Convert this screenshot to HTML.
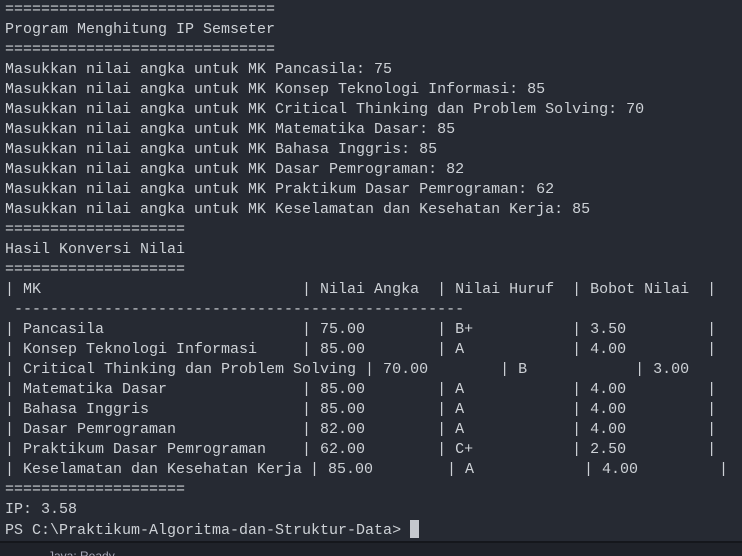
<!DOCTYPE html>
<html><head><meta charset="utf-8"><style>
html,body{margin:0;padding:0;}
body{width:742px;height:554px;background:#262a33;overflow:hidden;position:relative;font-family:"Liberation Mono",monospace;font-size:15px;color:#cdd1d6;}
.l{position:absolute;left:5px;height:20px;line-height:20px;white-space:pre;margin-top:1px;}
.cur{display:inline-block;width:9px;height:18px;background:#c5c8ce;vertical-align:-4px;}
#bar{position:absolute;left:0;top:541px;width:742px;height:13px;background:#1f2229;border-top:2px solid #15171c;overflow:hidden;}
#bar span{position:absolute;left:48px;top:6px;font-family:"Liberation Sans",sans-serif;font-size:12px;color:#aab;}
</style></head><body>
<div class="l" style="top:-1px">==============================</div>
<div class="l" style="top:19px">Program Menghitung IP Semseter</div>
<div class="l" style="top:39px">==============================</div>
<div class="l" style="top:59px">Masukkan nilai angka untuk MK Pancasila: 75</div>
<div class="l" style="top:79px">Masukkan nilai angka untuk MK Konsep Teknologi Informasi: 85</div>
<div class="l" style="top:99px">Masukkan nilai angka untuk MK Critical Thinking dan Problem Solving: 70</div>
<div class="l" style="top:119px">Masukkan nilai angka untuk MK Matematika Dasar: 85</div>
<div class="l" style="top:139px">Masukkan nilai angka untuk MK Bahasa Inggris: 85</div>
<div class="l" style="top:159px">Masukkan nilai angka untuk MK Dasar Pemrograman: 82</div>
<div class="l" style="top:179px">Masukkan nilai angka untuk MK Praktikum Dasar Pemrograman: 62</div>
<div class="l" style="top:199px">Masukkan nilai angka untuk MK Keselamatan dan Kesehatan Kerja: 85</div>
<div class="l" style="top:219px">====================</div>
<div class="l" style="top:239px">Hasil Konversi Nilai</div>
<div class="l" style="top:259px">====================</div>
<div class="l" style="top:279px">| MK                             | Nilai Angka  | Nilai Huruf  | Bobot Nilai  |</div>
<div class="l" style="top:299px"> --------------------------------------------------</div>
<div class="l" style="top:319px">| Pancasila                      | 75.00        | B+           | 3.50         |</div>
<div class="l" style="top:339px">| Konsep Teknologi Informasi     | 85.00        | A            | 4.00         |</div>
<div class="l" style="top:359px">| Critical Thinking dan Problem Solving | 70.00        | B            | 3.00</div>
<div class="l" style="top:379px">| Matematika Dasar               | 85.00        | A            | 4.00         |</div>
<div class="l" style="top:399px">| Bahasa Inggris                 | 85.00        | A            | 4.00         |</div>
<div class="l" style="top:419px">| Dasar Pemrograman              | 82.00        | A            | 4.00         |</div>
<div class="l" style="top:439px">| Praktikum Dasar Pemrograman    | 62.00        | C+           | 2.50         |</div>
<div class="l" style="top:459px">| Keselamatan dan Kesehatan Kerja</div>
<div class="l" style="top:459px;left:310px">| 85.00</div>
<div class="l" style="top:459px;left:447px">| A</div>
<div class="l" style="top:459px;left:584px">| 4.00</div>
<div class="l" style="top:459px;left:719px">|</div>
<div class="l" style="top:479px">====================</div>
<div class="l" style="top:499px">IP: 3.58</div>
<div class="l" style="top:519px">PS C:\Praktikum-Algoritma-dan-Struktur-Data&gt; <span class="cur"></span></div>
<div id="bar"><span>Java: Ready</span></div>
</body></html>
